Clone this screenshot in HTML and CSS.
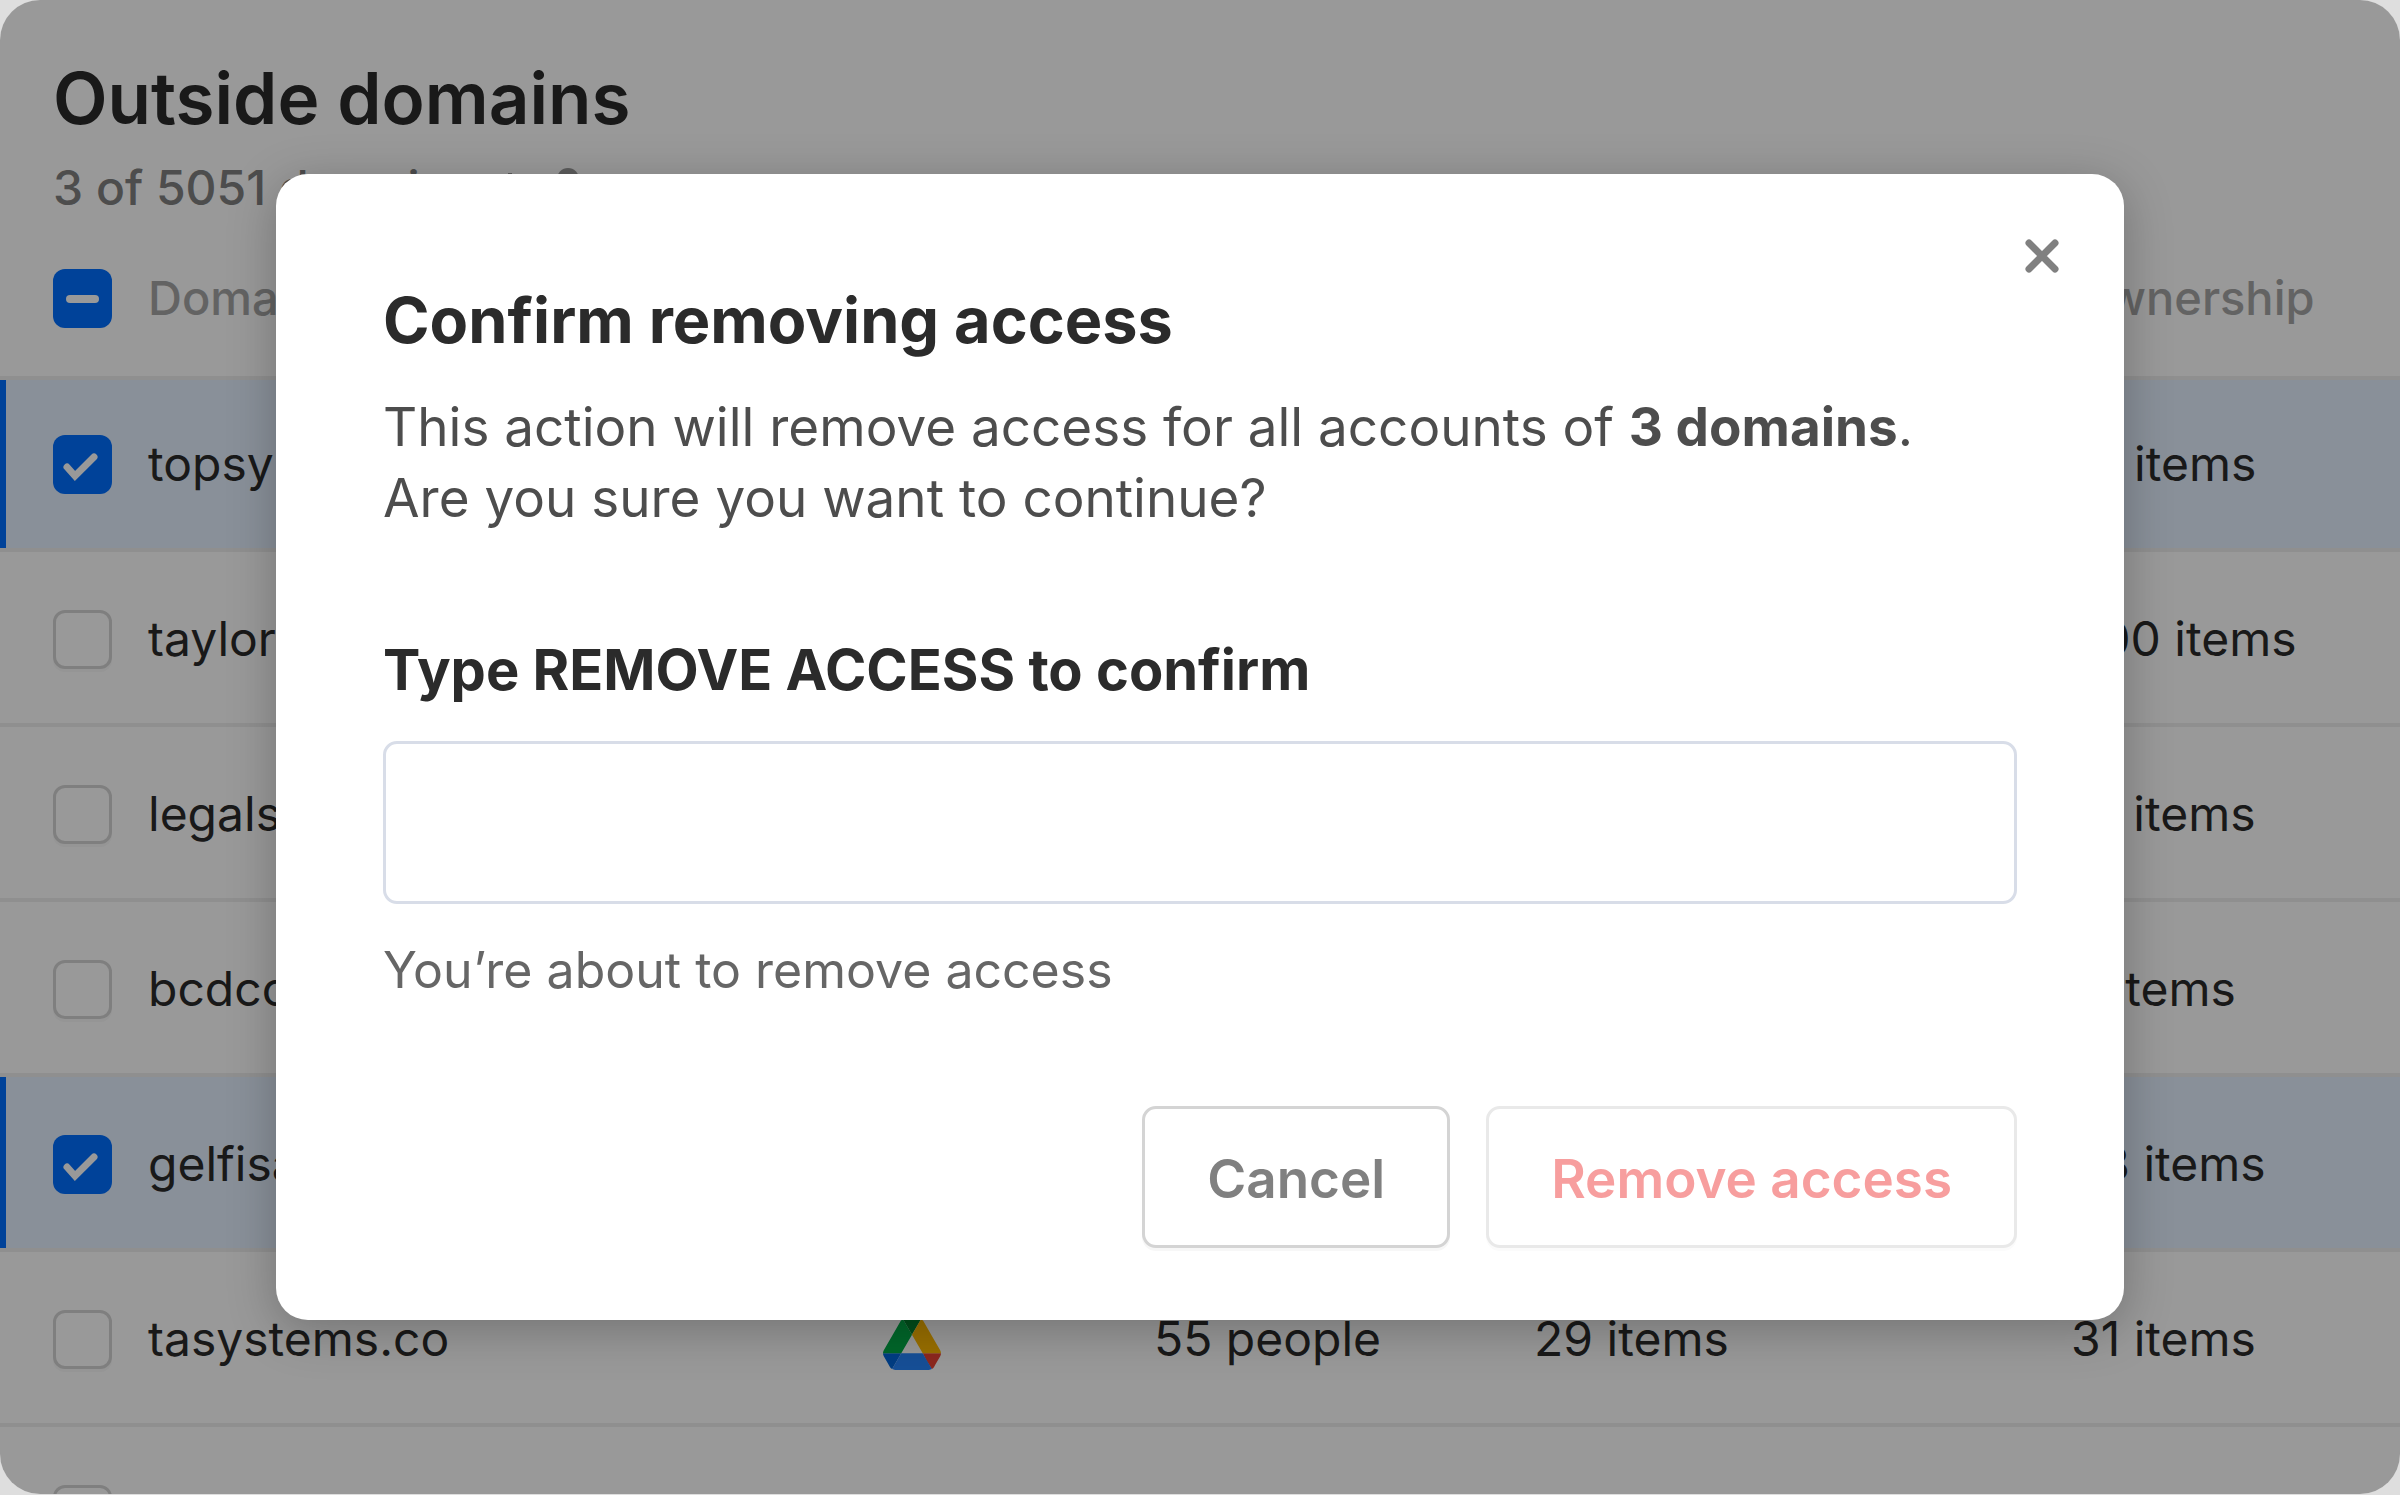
FILE: index.html
```html
<!DOCTYPE html>
<html lang="en">
<head>
<meta charset="utf-8">
<title>Outside domains</title>
<link rel="stylesheet" href="styles.css">
</head>
<body>
<svg class="sprite" aria-hidden="true">
  <symbol id="drive" viewBox="0 0 87.3 78">
    <path fill="#0066da" d="m6.6 66.85 3.85 6.65c.8 1.4 1.95 2.5 3.3 3.3l13.75-23.8h-27.5c0 1.55.4 3.1 1.2 4.5z"/>
    <path fill="#00ac47" d="m43.65 25-13.75-23.8c-1.35.8-2.5 1.9-3.3 3.3l-25.4 44a9.06 9.06 0 0 0 -1.2 4.5h27.5z"/>
    <path fill="#ea4335" d="m73.55 76.8c1.35-.8 2.5-1.9 3.3-3.3l1.6-2.75 7.65-13.25c.8-1.4 1.2-2.95 1.2-4.5h-27.502l5.852 11.5z"/>
    <path fill="#00832d" d="m43.65 25 13.75-23.8c-1.35-.8-2.9-1.2-4.5-1.2h-18.5c-1.6 0-3.15.45-4.5 1.2z"/>
    <path fill="#2684fc" d="m59.8 53h-32.3l-13.75 23.8c1.35.8 2.9 1.2 4.5 1.2h50.8c1.6 0 3.15-.45 4.5-1.2z"/>
    <path fill="#ffba00" d="m73.4 26.5-12.7-22c-.8-1.4-1.95-2.5-3.3-3.3l-13.75 23.8 16.15 28h27.45c0-1.55-.4-3.1-1.2-4.5z"/>
  </symbol>
</svg>
<div class="screen">
  <main class="page">
    <header class="page-head">
      <h1 class="page-title">Outside domains</h1>
      <p class="page-sub">3 of 5051 domains <svg class="people-icon" viewBox="0 0 112 64" aria-hidden="true"><path d="M20 17h4v12h12v4H24v12h-4V33H8v-4h12z"/><circle cx="80" cy="23" r="11"/><path d="M58 54c0-12 10-16 22-16s22 4 22 16z"/></svg></p>
    </header>
    <table class="domains">
      <colgroup><col class="c-check"><col><col class="c-app"><col class="c-people"><col class="c-items"><col class="c-owner"></colgroup>
      <thead>
        <tr><th><input class="check check-some" type="checkbox" aria-label="Select all"></th><th>Domain</th><th></th><th></th><th></th><th>Ownership</th></tr>
      </thead>
      <tbody>
        <tr class="selected"><td><input class="check" type="checkbox" checked aria-label="Select topsy"></td><td>topsy</td><td></td><td></td><td></td><td>41 items</td></tr>
        <tr><td><input class="check" type="checkbox" aria-label="Select taylor"></td><td>taylor</td><td></td><td></td><td></td><td>200 items</td></tr>
        <tr><td><input class="check" type="checkbox" aria-label="Select legals"></td><td>legals</td><td></td><td></td><td></td><td>21 items</td></tr>
        <tr><td><input class="check" type="checkbox" aria-label="Select bcdco"></td><td>bcdco</td><td></td><td></td><td></td><td>5 items</td></tr>
        <tr class="selected"><td><input class="check" type="checkbox" checked aria-label="Select gelfisa"></td><td>gelfisa</td><td></td><td></td><td></td><td>23 items</td></tr>
        <tr><td><input class="check" type="checkbox" aria-label="Select tasystems.co"></td><td>tasystems.co</td><td><svg class="drive"><use href="#drive"/></svg></td><td>55 people</td><td>29 items</td><td>31 items</td></tr>
        <tr><td><input class="check" type="checkbox" aria-label="Select next domain"></td><td></td><td></td><td></td><td></td><td></td></tr>
      </tbody>
    </table>
  </main>
  <div class="overlay">
    <form class="modal" role="dialog" aria-modal="true" aria-labelledby="modal-title">
      <button class="close" type="button" aria-label="Close"><svg viewBox="0 0 36 36"><path d="M5 5 31 31M31 5 5 31"/></svg></button>
      <h2 class="modal-title" id="modal-title">Confirm removing access</h2>
      <p class="modal-text">This action will remove access for all accounts of <strong>3 domains</strong>.<br>Are you sure you want to continue?</p>
      <label class="label" for="confirm">Type REMOVE ACCESS to confirm</label>
      <input class="field" id="confirm" type="text" aria-describedby="hint">
      <p class="hint" id="hint">You’re about to remove access</p>
      <div class="actions">
        <button class="btn" type="button">Cancel</button>
        <button class="btn btn-danger" type="submit" disabled>Remove access</button>
      </div>
    </form>
  </div>
</div>
</body>
</html>
```
FILE: styles.css
```css
* { box-sizing: border-box; }
body { margin: 0; background: #dedede; color: #2b2b2b; font: 48px/64px Inter, "Liberation Sans", sans-serif; }
h1, h2, p { margin: 0; }
.sprite { display: none; }
.screen { position: relative; height: calc(100vh - 1px); overflow: hidden; border-radius: 40px; background: #fff; }
.page-head { display: flex; flex-direction: column; gap: 14px; padding: 54px 53px 0; }
.page-title { font-size: 71px; line-height: 88px; font-weight: 600; }
.page-sub { display: flex; align-items: center; gap: 14px; color: #808080; font-weight: 500; }
.people-icon { width: 112px; height: 64px; fill: #999; }

.domains { width: 100%; table-layout: fixed; border-collapse: separate; border-spacing: 0; }
.c-check { width: 148px; }
.c-app { width: 271px; }
.c-people { width: 380px; }
.c-items { width: 537px; }
.c-owner { width: 329px; }
.domains th, .domains td { padding: 0; border-bottom: 4px solid #eee; text-align: left; vertical-align: middle; white-space: nowrap; }
.domains th { height: 160px; color: #a6a6a6; font-size: 47px; font-weight: 500; }
.domains td { height: 175px; padding-top: 3px; }
.domains tbody tr:first-child td { height: 172px; padding-top: 0; }
.domains th:first-child, .domains td:first-child { padding-left: 53px; }
.selected td { background: #e5f0ff; }
.selected td:first-child { box-shadow: inset 6px 0 #006eff; }
.drive { display: block; width: 58px; height: 52px; margin-top: 10px; }

.check { appearance: none; display: block; width: 59px; height: 59px; margin: 0; border: 3px solid #d4d4d4; border-radius: 12px; background: #fff center / 59px 59px no-repeat; box-shadow: 0 3px #f8f8f8; }
.check:checked, .check-some { border: 0; background-color: #006eff; box-shadow: none; }
.check:checked { background-image: url("data:image/svg+xml,%3Csvg xmlns='http://www.w3.org/2000/svg' viewBox='0 0 59 59'%3E%3Cpath d='M14 32 22 41 41 22' fill='none' stroke='white' stroke-width='7' stroke-linecap='round'/%3E%3C/svg%3E"); }
.check-some { background-image: url("data:image/svg+xml,%3Csvg xmlns='http://www.w3.org/2000/svg' viewBox='0 0 59 59'%3E%3Crect x='13' y='26' width='33' height='8' rx='4' fill='white'/%3E%3C/svg%3E"); }

.overlay { position: absolute; inset: 0; display: flex; align-items: center; justify-content: center; background: rgba(0, 0, 0, .4); }
.modal { position: relative; display: flex; flex-direction: column; width: 77%; padding: 107px 107px 72px; border-radius: 32px; background: #fff; box-shadow: 0 10px 48px rgba(0, 0, 0, .25); }
.close { position: absolute; top: 52px; right: 52px; width: 60px; height: 60px; padding: 12px; border: 0; background: none; }
.close svg { display: block; width: 36px; height: 36px; fill: none; stroke: #808080; stroke-width: 7; stroke-linecap: round; }
.modal-title { margin-bottom: 33px; font-size: 63px; line-height: 78px; font-weight: 700; }
.modal-text { margin-bottom: 100px; color: #4d4d4d; font-size: 53px; line-height: 71px; }
.modal-text strong { font-weight: 700; }
.label { margin-bottom: 35px; font-size: 56px; line-height: 72px; font-weight: 700; }
.field { width: 100%; height: 163px; padding: 0 40px; border: 3px solid #d8dde8; border-radius: 14px; background: #fff; font: inherit; }
.hint { margin-top: 34px; margin-bottom: 104px; color: #666; font-size: 50px; line-height: 64px; }
.actions { display: flex; justify-content: flex-end; gap: 36px; }
.btn { height: 142px; padding: 4px 62px 0; border: 3px solid #d4d4d4; border-radius: 14px; background: #fff; box-shadow: 0 3px #f7f7f7; color: #808080; font: 600 53px/64px Inter, "Liberation Sans", sans-serif; }
.btn-danger { border-color: #e9e9e9; box-shadow: 0 3px #fbfbfb; color: #f79e9e; }
```
